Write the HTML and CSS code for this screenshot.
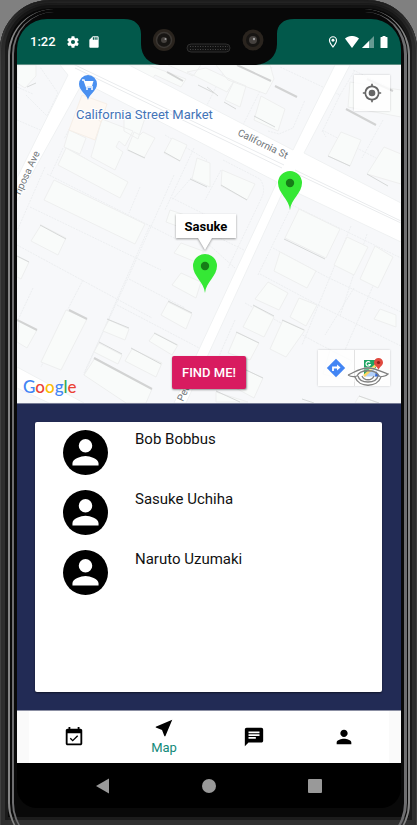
FILE: index.html
```html
<!DOCTYPE html>
<html lang="en">
<head>
<meta charset="utf-8">
<meta name="viewport" content="width=device-width, initial-scale=1">
<title>Map</title>
<link rel="stylesheet" href="styles.css">
</head>
<body>
<div class="device">
  <div class="screen">
    <header class="status">
      <div class="status-group">
        <span class="clock">1:22</span>
        <svg class="status-icon" viewBox="0 0 24 24" aria-hidden="true"><path d="M19.43 12.98c.04-.32.07-.64.07-.98s-.03-.66-.07-.98l2.11-1.65c.19-.15.24-.42.12-.64l-2-3.46c-.12-.22-.39-.3-.61-.22l-2.49 1c-.52-.4-1.08-.73-1.69-.98l-.38-2.65A.49.49 0 0 0 14 2h-4c-.25 0-.46.18-.49.42l-.38 2.65c-.61.25-1.17.59-1.69.98l-2.49-1c-.23-.09-.49 0-.61.22l-2 3.46c-.13.22-.07.49.12.64l2.11 1.65c-.04.32-.07.65-.07.98s.03.66.07.98l-2.11 1.65c-.19.15-.24.42-.12.64l2 3.46c.12.22.39.3.61.22l2.49-1c.52.4 1.08.73 1.69.98l.38 2.65c.03.24.24.42.49.42h4c.25 0 .46-.18.49-.42l.38-2.65c.61-.25 1.17-.59 1.69-.98l2.49 1c.23.09.49 0 .61-.22l2-3.46c.12-.22.07-.49-.12-.64zM12 15.5a3.5 3.5 0 1 1 0-7 3.5 3.5 0 0 1 0 7z"/></svg>
        <svg class="status-icon" viewBox="0 0 24 24" aria-hidden="true"><path d="M18 2h-8L4.020 8 4 20c0 1.100.9 2 2 2h12c1.100 0 2-.9 2-2V4c0-1.100-.9-2-2-2zm-6 6h-2V4h2v4zm3 0h-2V4h2v4zm3 0h-2V4h2v4z"/></svg>
      </div>
      <svg class="notch" viewBox="0 0 170 46" aria-hidden="true">
        <path fill="#080808" d="M0 0C11 0 17 6 17 15v10c0 12 8 20 19 21h96c12-1 21-9 21-21V15C153 6 159 0 170 0z"/>
        <circle cx="40" cy="21" r="11" fill="#2a241e"/><circle cx="40" cy="21" r="7.500" fill="#171513" stroke="#3c3834" stroke-width="1.500"/><circle cx="40" cy="21" r="3" fill="#45413e"/><circle cx="41.500" cy="20" r="1" fill="#a0a0a0"/>
        <circle cx="129" cy="21" r="10.500" fill="#2a241e"/><circle cx="129" cy="21" r="7" fill="#171513"/><circle cx="129" cy="21" r="4" fill="#45413e"/><circle cx="130" cy="20" r="1.200" fill="#a0a0a0"/>
        <rect x="63" y="25" width="43" height="8" rx="4" fill="#111" stroke="#2e2e2e"/>
        <path d="M66 27.500h38M66 30.500h38" stroke="#444" stroke-dasharray="1 1.500"/>
      </svg>
      <div class="status-group">
        <svg class="status-icon pin-icon" viewBox="0 0 24 24" aria-hidden="true"><path d="M12 2C8.100 2 5 5.100 5 9c0 5.300 7 13 7 13s7-7.700 7-13c0-3.900-3.100-7-7-7zM7 9a5 5 0 0 1 10 0c0 2.900-2.900 7.200-5 9.900C9.900 16.200 7 11.900 7 9z"/><circle cx="12" cy="9" r="2.500"/></svg>
        <svg class="wifi" viewBox="0 0 14 12" aria-hidden="true"><path d="M7 12 0 2.600C4-.9 10-.9 14 2.600z"/></svg>
        <svg class="signal" viewBox="0 0 12 12" aria-hidden="true"><path d="M12 0v12H0z" opacity=".4"/><path d="M7 5v7H0z"/></svg>
        <svg class="battery" viewBox="0 0 8 12" aria-hidden="true"><path d="M2.500 0h3v1H7q.500 0 .500.500v10q0 .500-.500.500H1q-.500 0-.500-.500v-10Q.500 1 1 1h1.500z"/></svg>
      </div>
    </header>

    <section class="map" aria-label="Map">
      <svg class="map-canvas" viewBox="17 65 384 338" preserveAspectRatio="xMidYMid slice">
        <defs>
          <g id="pin"><path fill="#35e835" d="M0 27C-1 16-12 10-12 0a12 12 0 0 1 24 0C12 10 1 16 0 27z"/><circle r="4.200" fill="#167d17"/></g>
        </defs>
        <rect x="17" y="65" width="384" height="338" fill="#f7f8fa"/>
        <g class="lots">
          <path d="M45 167 17 231M47 174 178 240M30 207 161 270M17 245 152 318M33 288 17 322M83 280 70 305 41 367M174 175 128 278 84 373M140 187 129 213M150 225 118 297 84 375M117 305 203 350M165 135 207 160 172 200M194 148 165 210M172 198 208 216M129 279 185 308M221 170 205 200M223 160 260 179Q266 188 262 197L228 268M207 232 244 250M207 243 235 268M401 171 322 130 326 137M383 120 362 158M401 93 353 70M355 70 340 95 280 67M340 95 322 132M272 67 243 125M227 65 206 107M258 275 292 205 401 258M273 248 327 277 401 312M351 226 302 345M367 234 340 316M260 274 320 306 401 346M354 288 325 335M245 303 317 343M317 343 352 361M235 320 215 365M380 270 345 350M17 120 45 132M26 95 47 116 58 93 40 67M17 87 33 94M90 88 74 120 64 139M63 148 50 176M88 160 71 150M268 131 279 134 293 128 305 100"/>
        </g>
        <g class="buildings">
          <path d="M18 65h18v11L25 88l-8-5zM108 65h40l38 14-5 8-26-12-4 6-42-13zM168 65l25 11 8-11zM206 68l28 13-7 11-40-20zM216 65l54 0 4 14-8 15-38-14zM234 81l12 5-6 21-15-7zM261 96l24 13-7 22-24-11zM90 100l15 4-8 16-14-4zM124 110l22 5-8 24-14-8zM69 130l17 8-6 16-16-7zM102 119l31 12-8 15-6-5-3 6 7 5-8 18-24-13zM134 132l6 3 3-3 12 6-11 20-17-8zM172 138l15 7-7 16-16-8zM197 158l13 5v24l-18-8zM66 148l62 34-8 16-62-33zM54 180l91 44-10 20-91-44zM41 225l25 13-8 17-27-14zM17 256l12 6-8 17-4-2zM170 210l15 5v14l-19-7zM181 243l22 8v14l-29-12zM181 273l20 9-5 16-24-13zM168 302l24 12-6 15-25-14zM66 310l21 9-26 51-20-8zM19 321l18 9-10 18-10-6zM109 320l20 9-4 11-22-9zM99 343l23 12-4 9-24-12zM132 349l30 14-6 14-31-16zM95 358l57 31-6 14h-20l-42-28zM155 333l23 12-6 10-23-14zM222 170l33 14-8 16-26-14zM299 209l41 20-14 29-41-20zM347 237l21 10-14 28-20-10zM375 246l18 11-15 31-18-9zM280 252l36 19-9 17-33-17zM268 282l20 11-9 17-24-11zM299 298l18 7-11 21-16-9zM254 306l20 11-10 20-21-10zM283 320l22 10-19 27-16-8zM237 332l22 11-9 17-22-7zM246 370l17 8-9 20-24-13zM216 392l32 10h-32zM380 309l16 6v12l-22-8zM330 350l22 11-10 18-19-5zM359 396l20 7h-24zM341 132l20 8-11 26-22-10zM384 147l17 7v30l-34-10zM350 82l51 8v27l-53-10z"/>
          <path class="shop" d="M82 95l25 9-12 36-26-10zM95 117l5-6 5 4-4 7z"/>
        </g>
        <g class="walls">
          <path d="M167 72l16 9M237 65l34 16M275 86l22 11M367 79l26 12M346 109l30 16M17 320l20 10M69 310l18 9M94 358l58 31" class="thick"/>
          <path d="M198 85l16 8M207 87l11 9M224 102l12 7M254 116l21 11M328 156l22 10M367 174l21 12M107 319l22 9M99 342l23 12M131 348l30 16M154 333l23 12M168 301l24 12M36 83l-9 4M40 225l26 14M17 256l12 6M128 150l17 8M164 152l16 9M190 179l17 8M284 239l41 20M221 185l26 15M253 305l21 11M282 320l22 10M236 332l23 11M246 370l17 8M216 391l24 11M302 399l12 4M359 396l20 7"/>
        </g>
        <g class="roads">
          <path d="M73 65h56L293 150 335 65h15L304 153l97 50v39L285 187 186 403h-12L277 182 83 82 17 201v-23L68 75 60 65z"/>
          <path d="M17 367l67 36H49L17 388z"/>
        </g>
        <path class="median" d="M73 64 284 165M75 68 282 168M295 170l106 51M297 174l104 49"/>
        <g class="street">
          <text transform="translate(40 153) rotate(-65)" text-anchor="end">riposa Ave</text>
          <text transform="translate(237 135) rotate(26)">California St</text>
          <text transform="translate(183 402) rotate(-65)">Pet</text>
        </g>
        <path fill="#4a90f0" d="M88 100c-1-6-9-9-9-16a9 9 0 0 1 18 0c0 7-8 10-9 16z"/>
        <path fill="none" stroke="#fff" stroke-width="1.300" d="M82 80h2l2.500 7h6.500"/><path fill="#fff" d="M84.500 81h9l-1.500 5h-6z"/><circle cx="87" cy="89" r="1" fill="#fff"/><circle cx="92" cy="89" r="1" fill="#fff"/>
        <text class="place" x="76" y="119">California Street Market</text>
        <use href="#pin" x="290" y="183"/>
        <use href="#pin" x="205" y="266"/>
        <g class="info">
          <path d="M176 214h60v24h-24l-7 12-7-12h-22z"/>
          <text x="206" y="231" text-anchor="middle">Sasuke</text>
        </g>
      </svg>
      <button class="map-button locate" type="button" aria-label="My location">
        <svg viewBox="0 0 24 24"><path d="M12 8a4 4 0 1 0 0 8 4 4 0 0 0 0-8zm8.940 3A8.990 8.990 0 0 0 13 3.060V1h-2v2.060A8.990 8.990 0 0 0 3.060 11H1v2h2.060A8.990 8.990 0 0 0 11 20.940V23h2v-2.060A8.990 8.990 0 0 0 20.940 13H23v-2h-2.060zM12 19a7 7 0 1 1 0-14 7 7 0 0 1 0 14z"/></svg>
      </button>
      <div class="toolbar">
        <button class="map-button" type="button" aria-label="Directions">
          <svg viewBox="0 0 20 20"><path fill="#4285f4" d="M10 .8 19.200 10 10 19.200.8 10z"/><path fill="none" stroke="#fff" stroke-width="1.800" d="M7 13V9.500h5"/><path fill="#fff" d="m11 6.500 3.500 3-3.500 3z"/></svg>
        </button>
        <button class="map-button" type="button" aria-label="Open in maps">
          <svg viewBox="0 0 20 20"><path fill="#1fa463" d="M1 2h12v8L5 17H1z"/><path fill="#b3d0fa" d="m9 10 8 8.500H1z"/><path stroke="#fdd663" stroke-width="2.500" d="m1 18 12-11"/><path fill="#3367d6" d="m13 13 4 5.500h-5z"/><path fill="none" stroke="#fff" stroke-width="1.200" d="M7 4.500A2.200 2.200 0 1 0 7.300 6.500H5.300"/><path fill="#e04a3f" d="M15.500 13c0-4-4.500-5-4.500-8.500a4.500 4.500 0 0 1 9 0c0 3.500-4.500 4.500-4.500 8.500z"/><circle cx="15.500" cy="4.500" r="1.600" fill="#8c2018"/></svg>
        </button>
      </div>
      <svg class="eye" viewBox="0 0 42 20" aria-hidden="true"><path d="M1 8C8 5 13 1 21 1s13 4 20 7c-5 4-11 10-20 10S6 12 1 8z" stroke="#fff" stroke-width="3" opacity=".5"/><path d="M1 8C8 5 13 1 21 1s13 4 20 6c-2 2-6 3-9 2M1 8c3 2 6 2 9 1M8 10c4 11 22 11 26 0M10 9c3-7 19-7 22 0M11 9c2 8 18 8 20 0M15 9c2 5 10 5 12 0"/></svg>
      <span class="google"><b>G</b><b>o</b><b>o</b><b>g</b><b>l</b><b>e</b></span>
      <button class="find" type="button">FIND ME!</button>
    </section>

    <main class="people">
      <ul class="card">
        <li><svg class="avatar" viewBox="2 2 20 20" aria-hidden="true"><circle cx="12" cy="12" r="10"/><path d="M12 6a3 3 0 1 1 0 6 3 3 0 0 1 0-6zM6.200 17.800v-1c0-2 3.800-3.300 5.800-3.300s5.800 1.300 5.800 3.300v1z"/></svg><span>Bob Bobbus</span></li>
        <li><svg class="avatar" viewBox="2 2 20 20" aria-hidden="true"><circle cx="12" cy="12" r="10"/><path d="M12 6a3 3 0 1 1 0 6 3 3 0 0 1 0-6zM6.200 17.800v-1c0-2 3.800-3.300 5.800-3.300s5.800 1.300 5.800 3.300v1z"/></svg><span>Sasuke Uchiha</span></li>
        <li><svg class="avatar" viewBox="2 2 20 20" aria-hidden="true"><circle cx="12" cy="12" r="10"/><path d="M12 6a3 3 0 1 1 0 6 3 3 0 0 1 0-6zM6.200 17.800v-1c0-2 3.800-3.300 5.800-3.300s5.800 1.300 5.800 3.300v1z"/></svg><span>Naruto Uzumaki</span></li>
      </ul>
    </main>

    <nav class="tabs">
      <div class="tabs-inner">
        <a href="#events" aria-label="Events"><svg viewBox="0 0 24 24"><path d="M16.530 11.060 15.470 10l-4.880 4.880-2.120-2.120-1.060 1.060L10.590 17l5.940-5.940zM19 3h-1V1h-2v2H8V1H6v2H5c-1.110 0-1.990.9-1.990 2L3 19c0 1.100.89 2 2 2h14c1.100 0 2-.9 2-2V5c0-1.100-.9-2-2-2zm0 16H5V8h14v11z"/></svg></a>
        <a href="#map" aria-current="page"><svg viewBox="0 0 24 24"><path d="M21 3 3 10.530v.98l6.840 2.650L12.480 21h.98L21 3z"/></svg><span>Map</span></a>
        <a href="#chat" aria-label="Chat"><svg viewBox="0 0 24 24"><path d="M20 2H4c-1.100 0-1.990.9-1.990 2L2 22l4-4h14c1.100 0 2-.9 2-2V4c0-1.100-.9-2-2-2zM6 9h12v2H6V9zm8 5H6v-2h8v2zm4-6H6V6h12v2z"/></svg></a>
        <a href="#profile" aria-label="Profile"><svg viewBox="0 0 24 24"><path d="M12 12c2.210 0 4-1.790 4-4s-1.790-4-4-4-4 1.790-4 4 1.790 4 4 4zm0 2c-2.670 0-8 1.340-8 4v2h16v-2c0-2.660-5.330-4-8-4z"/></svg></a>
      </div>
    </nav>

    <footer class="system">
      <button type="button" aria-label="Back"><svg viewBox="0 0 16 16"><path d="M14 .5v15L1 8z"/></svg></button>
      <button type="button" aria-label="Home"><svg viewBox="0 0 16 16"><circle cx="8" cy="8" r="7"/></svg></button>
      <button type="button" aria-label="Recent apps"><svg viewBox="0 0 16 16"><rect x="1" y="1" width="14" height="14" rx="1"/></svg></button>
    </footer>
  </div>
</div>
</body>
</html>
```
FILE: styles.css
```css
* { box-sizing: border-box; }

body {
  margin: 0;
  background: #808080;
  font-family: Roboto, "Liberation Sans", sans-serif;
  color: #111;
}

button {
  margin: 0;
  padding: 0;
  border: 0;
  background: none;
  font: inherit;
}

.device {
  position: relative;
  display: flex;
  min-height: 100vh;
  padding: 19px 16px 17px 17px;
  overflow: hidden;
  border-radius: 50px 50px 0 0;
  background: #090909;
  box-shadow: inset 0 20px 20px -16px #090909, inset 0 2px 0 1px #444, inset 0 0 0 5px #303030, inset 0 0 0 8px #1c1c1c;
}

/* Metallic rails along both sides of the case */
.device::before,
.device::after {
  content: "";
  position: absolute;
  pointer-events: none;
}

.device::before {
  inset: 9px 7px -24px 8px;
  border: solid #858585;
  border-width: 0 2px;
  border-radius: 46px;
}

.device::after {
  inset: 12px 10px -20px 12px;
  border: solid #6e6e70;
  border-width: 0 3px 0 2px;
  border-radius: 42px;
}

.screen {
  display: flex;
  flex: 1;
  flex-direction: column;
  min-width: 0;
  overflow: hidden;
  border-radius: 30px 30px 20px 20px;
  background: #000;
}

.status {
  position: relative;
  display: flex;
  align-items: center;
  justify-content: space-between;
  height: 46px;
  padding: 0 13px;
  border-bottom: 1px solid #5f8f85;
  background: #02594b;
  color: #fff;
}

.status-group {
  display: flex;
  align-items: center;
  gap: 7px;
}

.status-group:last-child { gap: 3px; }

.status svg { fill: currentColor; }

.clock {
  margin-right: 3px;
  font-size: 13px;
  font-weight: 500;
}

.status-icon { width: 14px; height: 14px; }
.pin-icon { margin-right: 2px; }
.wifi { width: 14px; height: 12px; }
.signal { width: 12px; height: 12px; }
.battery { width: 8px; height: 12px; margin-left: 3px; }

.notch {
  position: absolute;
  top: 0;
  left: 50%;
  width: 170px;
  height: 46px;
  transform: translateX(-50%);
}

.map {
  position: relative;
  flex: 338 1 0;
  min-height: 240px;
  overflow: hidden;
}

.map-canvas {
  position: absolute;
  inset: 0;
  width: 100%;
  height: 100%;
}

.lots { fill: none; stroke: #eceef0; stroke-width: 1; stroke-dasharray: 2 1; }
.buildings { fill: #f9fbfa; stroke: #eeefef; }
.shop { fill: #fdf8f3; stroke: #f6efe8; }
.walls { fill: none; stroke: #d6d8d8; stroke-width: 1; }
.thick { stroke: #d2d3d3; stroke-width: 2; }
.roads { fill: #fff; stroke: #eff1f2; }
.median { fill: none; stroke: #e9ebed; }

.street text {
  fill: #707579;
  stroke: #fff;
  stroke-width: 2px;
  paint-order: stroke;
  font-size: 10px;
}

.place {
  fill: #4474b8;
  stroke: #fff;
  stroke-width: 2px;
  paint-order: stroke;
  font-size: 13px;
}

.info path {
  fill: #fff;
  filter: drop-shadow(0 1px 1px rgb(0 0 0 / 40%));
}

.info text { font-size: 13px; font-weight: 700; }

.map-button {
  display: grid;
  place-items: center;
  width: 36px;
  height: 36px;
  background: rgb(255 255 255 / 80%);
}

.map-button svg { width: 20px; height: 20px; fill: #666; }

.locate {
  position: absolute;
  top: 10px;
  right: 11px;
  box-shadow: 0 0 2px rgb(0 0 0 / 20%);
}

.toolbar {
  position: absolute;
  right: 11px;
  bottom: 17px;
  display: flex;
  box-shadow: 0 0 2px rgb(0 0 0 / 20%);
}

.toolbar .map-button + .map-button { border-left: 1px solid #e2e2e2; }

.eye {
  position: absolute;
  right: 12px;
  bottom: 16px;
  width: 42px;
  height: 20px;
  fill: none;
  stroke: #808080;
  stroke-width: 1.3;
}

.google {
  position: absolute;
  bottom: 4px;
  left: 6px;
  font-family: Lato, sans-serif;
  font-size: 17px;
  line-height: 24px;
  text-shadow: 0 0 2px #fff;
}

.google b { font-weight: 500; color: #4285f4; }
.google b:nth-child(2), .google b:nth-child(6) { color: #ea4335; }
.google b:nth-child(3) { color: #fbbc05; }
.google b:nth-child(5) { color: #34a853; }

.find {
  position: absolute;
  bottom: 14px;
  left: 50%;
  height: 33px;
  padding: 0 10px;
  border-radius: 2px;
  background: #d81b60;
  box-shadow: 0 1px 2px rgb(0 0 0 / 40%);
  color: #fff;
  font-size: 13px;
  font-weight: 500;
  transform: translateX(-50%);
}

.people {
  display: flex;
  flex: 270 1 0;
  padding: 18px 19px 18px 18px;
  border-top: 1px solid #777c95;
  background: #222b55;
}

.card {
  flex: 1;
  margin: 0;
  padding: 8px 28px;
  border-radius: 2px;
  background: #fff;
  box-shadow: 0 1px 2px rgb(0 0 0 / 50%);
  list-style: none;
}

.card li {
  display: flex;
  gap: 27px;
  height: 60px;
  font-size: 15px;
  line-height: 18px;
}

.avatar {
  width: 45px;
  height: 45px;
}

.avatar path { fill: #fff; }

.tabs {
  padding: 0 12px;
  border-top: 1px solid #8b8fa3;
  background: #fafafa;
}

.tabs-inner {
  display: flex;
  height: 52px;
  background: #fff;
}

.tabs a {
  display: flex;
  flex: 1;
  flex-direction: column;
  align-items: center;
  justify-content: center;
  color: #128a7a;
  font-size: 13px;
  line-height: 18px;
  text-decoration: none;
}

.tabs svg { width: 22px; height: 22px; fill: #000; }

.system {
  display: flex;
  align-items: center;
  justify-content: center;
  gap: 90px;
  height: 45px;
}

.system svg { display: block; width: 16px; height: 16px; fill: #999; }
```
